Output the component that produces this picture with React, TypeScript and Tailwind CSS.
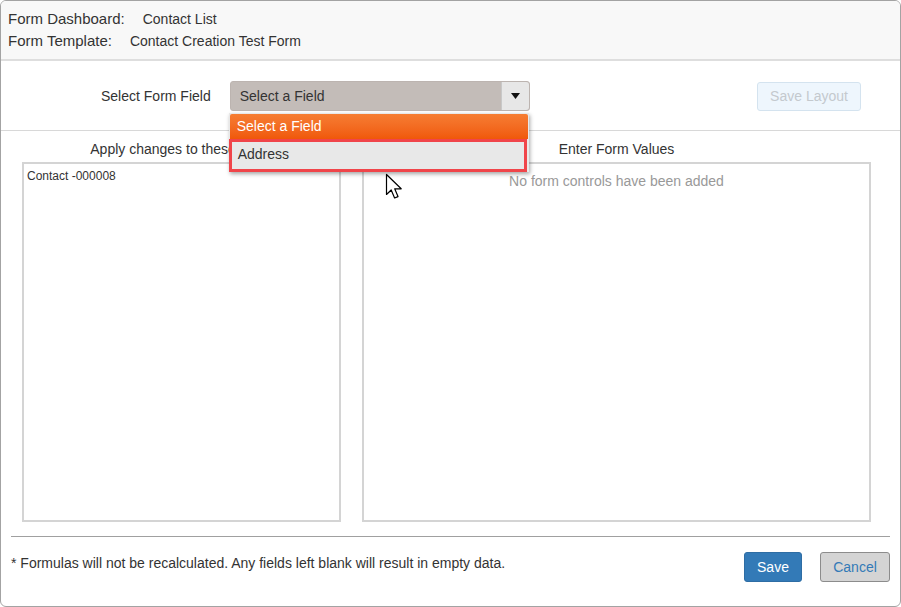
import React from 'react';

const Cursor: React.FC = () => (
  <svg width="20" height="28" viewBox="0 0 20 28" className="absolute left-[384px] top-[172px]">
    <path
      d="M1.5 1.5 L1.5 21.5 L6.2 17 L9.6 25 L13 23.6 L9.7 15.8 L16.2 15.8 Z"
      fill="#ffffff"
      stroke="#000000"
      strokeWidth="1.2"
      strokeLinejoin="round"
    />
  </svg>
);

export default function App() {
  return (
    <div className="w-[901px] h-[607px] bg-white font-['Liberation_Sans',Arial,sans-serif] text-[#333] text-[14px]">
      <div className="relative w-full h-full border border-[#a3a3a3] rounded-[6px] overflow-hidden flex flex-col">
        {/* Header */}
        <div className="h-[60px] shrink-0 bg-[#f8f8f8] border-b-2 border-[#dedede] px-[7px] pt-[7px] leading-[22px]">
          <div className="flex items-baseline gap-[18px]">
            <span className="text-[15px]">Form Dashboard:</span>
            <span>Contact List</span>
          </div>
          <div className="flex items-baseline gap-[18px]">
            <span className="text-[15px]">Form Template:</span>
            <span>Contact Creation Test Form</span>
          </div>
        </div>

        {/* Toolbar */}
        <div className="h-[70px] shrink-0 border-b border-[#d8d8d8] flex items-start pt-[20px] pl-[100px] pr-[39px]">
          <span className="leading-[30px]">Select Form Field</span>
          <div className="relative ml-[19px]">
            <div className="w-[300px] h-[30px] rounded-[3px] border border-[#bcb4b0] bg-[#c3bcb8] flex items-center">
              <span className="pl-[9px] flex-1">Select a Field</span>
              <div className="w-[28px] h-full bg-[#e7e7e7] border-l border-[#c8c8c8] rounded-r-[3px] flex items-center justify-center">
                <svg width="9" height="6" viewBox="0 0 9 6">
                  <path d="M0 0 H9 L4.5 6 Z" fill="#111" />
                </svg>
              </div>
            </div>
            {/* Dropdown */}
            <div className="absolute left-[-1px] top-[32px] w-[300px] bg-[#e8e8e8] shadow-[1px_2px_4px_rgba(0,0,0,0.35)] z-10">
              <div className="h-[25px] mx-[1px] mt-[1px] rounded-t-[2px] bg-gradient-to-b from-[#f67d32] to-[#f05808] text-white pl-[7px] flex items-center">
                Select a Field
              </div>
              <div className="h-[33px] border-[3px] border-[#f0454a] bg-[#e8e8e8] pl-[6px] pb-[2px] flex items-center mr-[2px]">
                Address
              </div>
            </div>
          </div>
          <button className="ml-auto mt-[1px] w-[104px] h-[29px] rounded-[3px] border border-[#d4e3ef] bg-[#eef6fd] text-[#c4c9ce]">
            Save Layout
          </button>
        </div>

        {/* Columns */}
        <div className="flex gap-[21px] pl-[21px] pr-[29px] pt-[9px]">
          <div className="w-[319px] flex flex-col">
            <div className="text-center leading-[18px] pl-[2px]">Apply changes to these forms</div>
            <div className="mt-[4px] h-[360px] border-2 border-[#d4d4d4] px-[3px] pt-[4px] text-[12px] leading-[16px]">
              Contact -000008
            </div>
          </div>
          <div className="flex-1 flex flex-col">
            <div className="text-center leading-[18px]">Enter Form Values</div>
            <div className="mt-[4px] h-[360px] border-2 border-[#d4d4d4] text-center text-[#999] pt-[8px] leading-[18px]">
              No form controls have been added
            </div>
          </div>
        </div>

        {/* Footer */}
        <div className="mx-[10px] mt-[14px] border-t border-[#a0a0a0] flex items-start pt-[15px]">
          <span className="mt-[2px] leading-[18px]">* Formulas will not be recalculated. Any fields left blank will result in empty data.</span>
          <button className="ml-auto w-[58px] h-[30px] rounded-[3px] bg-[#337ab7] border border-[#2e6da4] text-white">
            Save
          </button>
          <button className="ml-[18px] w-[70px] h-[30px] rounded-[3px] bg-[#d4d4d4] border border-[#8c8c8c] text-[#337ab7]">
            Cancel
          </button>
        </div>

        <Cursor />
      </div>
    </div>
  );
}
